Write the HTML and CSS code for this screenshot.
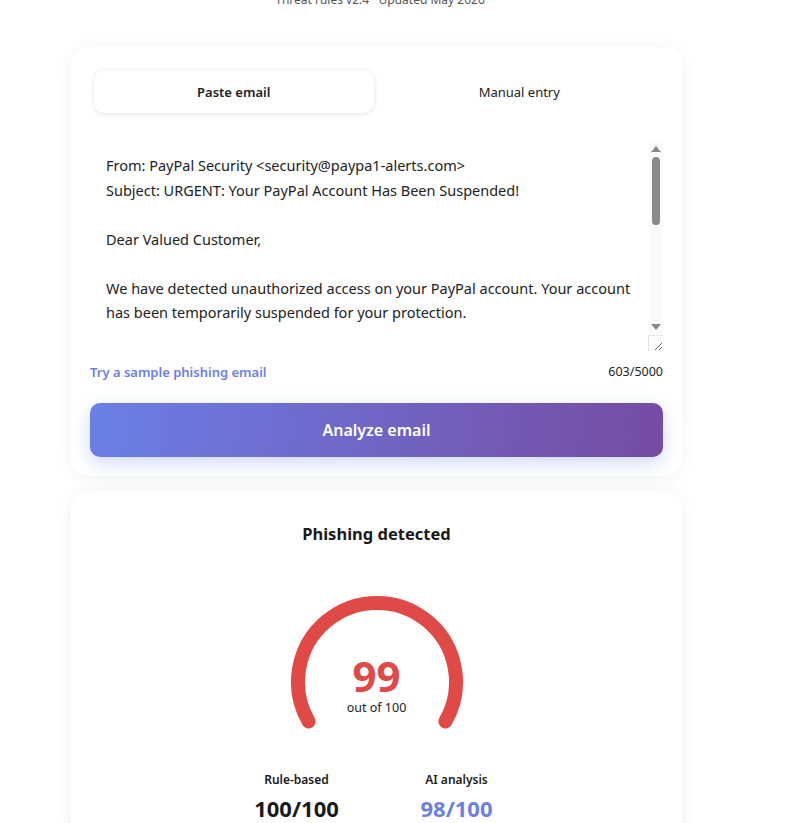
FILE: index.html
```html
<!DOCTYPE html>
<html lang="en">
<head>
  <meta charset="UTF-8" />
  <meta name="viewport" content="width=device-width, initial-scale=1" />
  <title>Phishing Checker</title>
  <link rel="stylesheet" href="styles.css">
</head>
<body>
  <p class="meta">Threat rules v2.4 · Updated May 2026</p>

  <!-- INPUT CARD -->
  <section class="card">
    <div class="tabs">
      <button class="tab active" type="button">Paste email</button>
      <button class="tab" type="button">Manual entry</button>
    </div>

    <div class="input-wrap">
      <textarea class="email-input" spellcheck="false">From: PayPal Security &lt;security@paypa1-alerts.com&gt;
Subject: URGENT: Your PayPal Account Has Been Suspended!

Dear Valued Customer,

We have detected unauthorized access on your PayPal account. Your account has been temporarily suspended for your protection.

To restore full access, you must verify your identity within 24 hours or your account will be permanently closed.

Click here to verify now: http://paypa1-secure-login.com/verify

Please have your card number, expiry date and security code ready.

Thank you,
PayPal Security Team</textarea>
      <!-- classic scrollbar look -->
      <div class="fake-scroll" aria-hidden="true">
        <span class="arrow up"></span>
        <span class="thumb"></span>
        <span class="arrow down"></span>
      </div>
      <div class="fake-corner" aria-hidden="true"></div>
    </div>

    <div class="input-footer">
      <a href="#" class="sample-link">Try a sample phishing email</a>
      <span class="char-count">603/5000</span>
    </div>

    <button class="analyze-btn" type="button">Analyze email</button>
  </section>

  <!-- RESULT CARD -->
  <section class="card result">
    <h2>Phishing detected</h2>

    <div class="gauge">
      <svg width="180" height="140" viewBox="0 0 180 140">
        <path d="M 21.6 129.5 A 79 79 0 1 1 158.4 129.5" fill="none" stroke="#e04a46" stroke-width="14" stroke-linecap="round" />
      </svg>
      <div class="gauge-value">
        <span class="score">99</span>
        <span class="score-sub">out of 100</span>
      </div>
    </div>

    <div class="stats">
      <div class="stat">
        <span class="stat-label">Rule-based</span>
        <span class="stat-value">100/100</span>
      </div>
      <div class="stat">
        <span class="stat-label">AI analysis</span>
        <span class="stat-value ai">98/100</span>
      </div>
    </div>
  </section>
</body>
</html>
```

FILE: styles.css
```css
body {
  font-family: "Segoe UI", "Noto Sans", sans-serif;
  background: #fff;
  color: #1a1a1a;
  margin: 0;
  overflow: hidden;
}

.meta {
  margin: -9px 0 0 0;
  width: 760px;
  text-align: center;
  font-size: 12px;
  line-height: 18px;
  color: #555;
}

.card {
  box-sizing: border-box;
  width: 611px;
  margin: 38px 0 0 71px;
  padding: 19px;
  background: #fff;
  border-radius: 18px;
  box-shadow: 0 2px 18px rgba(0, 0, 0, 0.06);
}

.tabs {
  display: grid;
  grid-template-columns: 1fr 1fr;
  gap: 6px;
  padding: 4px;
  border-radius: 12px;
  background: #fff;
}

.tab {
  font-family: inherit;
  font-size: 13px;
  color: #222;
  height: 43px;
  border: none;
  background: transparent;
  border-radius: 10px;
  cursor: pointer;
}

.tab.active {
  font-weight: 600;
  background: #fff;
  box-shadow: 0 1px 5px rgba(0, 0, 0, 0.12);
}

.input-wrap {
  position: relative;
  margin-top: 24px;
}

.email-input {
  display: block;
  box-sizing: border-box;
  width: 100%;
  height: 210px;
  padding: 12px 30px 12px 16px;
  font-family: inherit;
  font-size: 14.5px;
  line-height: 24.5px;
  color: #222;
  border: none;
  outline: none;
  background: #fff;
}

.fake-scroll {
  position: absolute;
  top: 2px;
  right: 0;
  bottom: 17px;
  width: 14px;
  background: #f9f9f9;
  display: flex;
  flex-direction: column;
  align-items: center;
  pointer-events: none;
}

.arrow {
  width: 0;
  height: 0;
  border-left: 5px solid transparent;
  border-right: 5px solid transparent;
}

.arrow.up {
  margin-top: 3px;
  border-bottom: 6px solid #8a8a8a;
}

.arrow.down {
  margin-top: auto;
  margin-bottom: 4px;
  border-top: 6px solid #8a8a8a;
}

.thumb {
  width: 8px;
  height: 68px;
  margin-top: 5px;
  border-radius: 4px;
  background: #8a8a8a;
}

.fake-corner {
  position: absolute;
  right: 0;
  bottom: 0;
  width: 14px;
  height: 15px;
  border-top: 1px solid #e4e4e4;
  border-left: 1px solid #e4e4e4;
  pointer-events: none;
}

.input-footer {
  display: flex;
  justify-content: space-between;
  align-items: center;
  margin-top: 13px;
  font-size: 13px;
  line-height: 16px;
}

.sample-link {
  color: #6c7fe4;
  font-weight: 600;
  text-decoration: none;
}

.char-count {
  color: #222;
  font-size: 12.5px;
}

.analyze-btn {
  display: block;
  width: 100%;
  height: 54px;
  margin-top: 23px;
  border: none;
  border-radius: 10px;
  background: linear-gradient(100deg, #6a7fe6 0%, #764ba2 100%);
  color: #fff;
  font-family: inherit;
  font-size: 16px;
  font-weight: 600;
  box-shadow: 0 6px 18px rgba(102, 126, 234, 0.3);
  cursor: pointer;
}

.result {
  margin-top: 15px;
  padding-top: 30px;
  text-align: center;
}

.result h2 {
  margin: 0;
  font-size: 16.5px;
  line-height: 26px;
  font-weight: 700;
}

.gauge {
  position: relative;
  width: 180px;
  height: 140px;
  margin: 45px auto 0;
}

.gauge svg {
  display: block;
}

.gauge-value {
  position: absolute;
  left: 0;
  right: 0;
  top: 63px;
  display: flex;
  flex-direction: column;
  align-items: center;
}

.score {
  font-size: 42px;
  line-height: 42px;
  font-weight: 700;
  color: #e04a46;
}

.score-sub {
  margin-top: 3px;
  font-size: 12.5px;
  line-height: 16px;
  color: #222;
}

.stats {
  display: grid;
  grid-template-columns: 140px 140px;
  justify-content: center;
  gap: 20px;
  margin-top: 40px;
}

.stat {
  display: flex;
  flex-direction: column;
  align-items: center;
}

.stat-label {
  font-size: 12px;
  font-weight: 600;
  line-height: 16px;
}

.stat-value {
  margin-top: 6px;
  font-size: 22px;
  font-weight: 700;
  line-height: 28px;
}

.stat-value.ai {
  color: #6c7fe4;
}
```
